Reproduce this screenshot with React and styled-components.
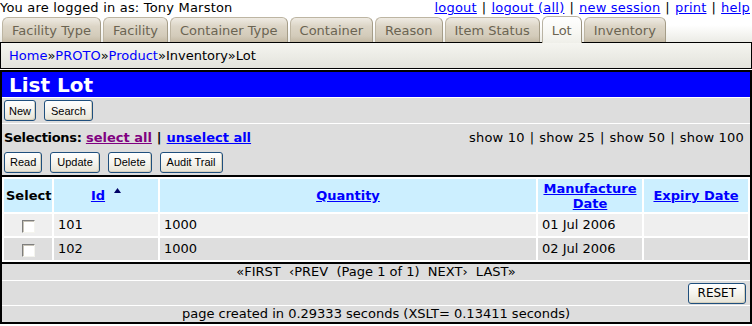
import React from 'react'
import styled, { createGlobalStyle } from 'styled-components'

const GlobalStyle = createGlobalStyle`
  html, body {
    margin: 0;
    padding: 0;
    background: #fff;
    overflow: hidden;
  }
  body {
    font-family: "DejaVu Sans", Verdana, sans-serif;
    font-size: 13px;
    letter-spacing: 0.2px;
    color: #000;
  }
`

const TopBar = styled.div`
  display: flex;
  justify-content: space-between;
  height: 16px;
  line-height: 15px;
  white-space: nowrap;
  padding-right: 2px;
`

const Link = styled.a`
  color: ${p => (p.$visited ? '#800080' : '#0000ff')};
  text-decoration: ${p => (p.$plain ? 'none' : 'underline')};
  cursor: pointer;
`

const Sep = styled.span`
  padding: 0 ${p => p.$pad || 5}px;
`

const TabBar = styled.div`
  position: relative;
  z-index: 1;
  display: flex;
  align-items: flex-end;
  gap: 2px;
  height: 26px;
  padding-left: 2px;
  letter-spacing: 0;
  background: linear-gradient(#fff 35%, #ebebe5);
`

const Tab = styled.div`
  box-sizing: border-box;
  height: ${p => (p.$active ? 27 : 25)}px;
  margin-bottom: ${p => (p.$active ? -1 : 0)}px;
  padding: ${p => (p.$active ? 3 : 2)}px 9px 0;
  line-height: 21px;
  white-space: nowrap;
  color: #6b6452;
  border: 1px solid ${p => (p.$active ? '#b9b3a3' : '#bdb5a2')};
  border-right-color: ${p => (p.$active ? '#9c9481' : '#a59d88')};
  border-bottom: none;
  border-radius: 6px 6px 0 0;
  background: ${p =>
    p.$active
      ? 'linear-gradient(#ffffff, #f7f7f3 60%, #efefe9)'
      : 'linear-gradient(#efebe3, #dcd5c6 35%, #d3cbba 75%, #c3b9a4)'};
`

const Crumbs = styled.div`
  box-sizing: border-box;
  height: 27px;
  margin-bottom: 1px;
  padding-left: 8px;
  line-height: 25px;
  letter-spacing: 0;
  border: 1px solid #000;
  background: linear-gradient(#f5f5f0, #ecece6 50%, #e3e3dc);
  white-space: nowrap;
`

const Main = styled.div`
  border: 2px solid #000;
`

const Title = styled.div`
  height: 25px;
  padding-left: 7px;
  line-height: 26px;
  background: #0000ff;
  color: #fff;
  font-weight: bold;
  font-size: 20px;
  letter-spacing: 0;
`

const Band = styled.div`
  box-sizing: border-box;
  height: ${p => p.$h}px;
  background: #dddddd;
  border-top: ${p => (p.$line ? '1px solid #fff' : 'none')};
`

const ButtonRow = styled.div`
  display: flex;
  align-items: center;
  gap: 8px;
  height: ${p => p.$h || 25}px;
  padding-left: 2px;
  justify-content: ${p => (p.$right ? 'flex-end' : 'flex-start')};
  padding-right: ${p => (p.$right ? 4 : 0)}px;
`

const Button = styled.button`
  box-sizing: border-box;
  height: 21px;
  padding: 0 ${p => p.$pad || 5}px;
  margin: 0;
  font-family: ${p => (p.$big ? '"DejaVu Sans", Verdana, sans-serif' : '"Liberation Sans", Arial, sans-serif')};
  font-size: ${p => (p.$big ? 12 : 11)}px;
  letter-spacing: 0;
  color: #000;
  border: 1px solid #1f4f7d;
  border-radius: 3px;
  background: linear-gradient(#ffffff, #f5f4ee 50%, #e6e3d6);
  box-shadow: inset -1px -1px 0 #d6d0bd;
`

const SelRow = styled.div`
  display: flex;
  justify-content: space-between;
  align-items: center;
  height: 27px;
  padding: 0 6px 0 2px;
  white-space: nowrap;
`

const Bold = styled.span`
  font-weight: bold;
  letter-spacing: ${p => (p.$tight ? '-0.3px' : '0')};
`

const TableWrap = styled.div`
  border-top: 2px solid #000;
  border-bottom: 2px solid #000;
  background: #fff;
`

const Table = styled.table`
  width: 100%;
  table-layout: fixed;
  border-collapse: separate;
  border-spacing: 2px;
`

const Th = styled.th`
  box-sizing: border-box;
  width: ${p => p.$w}px;
  height: 33px;
  padding: 0 2px;
  background: #ccefff;
  font-weight: bold;
  text-align: center;
  line-height: 15px;
  letter-spacing: 0;
  a {
    color: #0000ff;
  }
`

const Td = styled.td`
  height: 22px;
  padding: 0 4px;
  background: ${p => (p.$alt ? '#dedede' : '#efefef')};
  text-align: ${p => (p.$center ? 'center' : 'left')};
  line-height: 16px;
  letter-spacing: 0;
  white-space: nowrap;
`

const Check = styled.span`
  display: inline-block;
  box-sizing: border-box;
  width: 13px;
  height: 13px;
  margin-top: 3px;
  vertical-align: top;
  border: 1px solid;
  border-color: #7e7e7e #f4f4ee #f4f4ee #7e7e7e;
  background: #fff;
  box-shadow: inset 1px 1px 0 #c8c4b8;
`

const SortArrow = styled.svg`
  margin-left: 9px;
  vertical-align: 7px;
`

const Centered = styled.div`
  height: 100%;
  text-align: center;
  line-height: ${p => p.$lh || 16}px;
  white-space: pre;
  letter-spacing: 0;
`

const tabs = ['Facility Type', 'Facility', 'Container Type', 'Container', 'Reason', 'Item Status', 'Lot', 'Inventory']

const rows = [
  { id: '101', qty: '1000', made: '01 Jul 2006' },
  { id: '102', qty: '1000', made: '02 Jul 2006' },
]

export default function App() {
  return (
    <>
      <GlobalStyle />
      <TopBar>
        <span>You are logged in as: Tony Marston</span>
        <span>
          <Link>logout</Link><Sep>|</Sep>
          <Link>logout (all)</Link><Sep>|</Sep>
          <Link>new session</Link><Sep>|</Sep>
          <Link>print</Link><Sep>|</Sep>
          <Link>help</Link>
        </span>
      </TopBar>
      <TabBar>
        {tabs.map(t => (
          <Tab key={t} $active={t === 'Lot'}>{t}</Tab>
        ))}
      </TabBar>
      <Crumbs>
        <Link $plain>Home</Link>»<Link $plain>PROTO</Link>»<Link $plain>Product</Link>»Inventory»Lot
      </Crumbs>
      <Main>
        <Title>List Lot</Title>
        <Band $h={26} $line>
          <ButtonRow>
            <Button $pad={4}>New</Button>
            <Button $pad={6}>Search</Button>
          </ButtonRow>
        </Band>
        <Band $h={52} $line>
          <SelRow>
            <span>
              <Bold $tight>Selections: </Bold>
              <Bold><Link $visited>select all</Link></Bold>
              <Bold><Sep $pad={5}>|</Sep></Bold>
              <Bold><Link>unselect all</Link></Bold>
            </span>
            <span>
              show 10<Sep>|</Sep>show 25<Sep>|</Sep>show 50<Sep>|</Sep>show 100
            </span>
          </SelRow>
          <ButtonRow $h={22}>
            <Button>Read</Button>
            <Button $pad={6}>Update</Button>
            <Button>Delete</Button>
            <Button $pad={6}>Audit Trail</Button>
          </ButtonRow>
        </Band>
        <TableWrap>
          <Table>
            <thead>
              <tr>
                <Th $w={48}>Select</Th>
                <Th $w={104}>
                  <Link>Id</Link>
                  <SortArrow width="7" height="5" viewBox="0 0 7 5">
                    <path d="M3.5 0 L7 5 L0 5 Z" fill="#000066" />
                  </SortArrow>
                </Th>
                <Th><Link>Quantity</Link></Th>
                <Th $w={104}><Link>Manufacture<br />Date</Link></Th>
                <Th $w={104}><Link>Expiry Date</Link></Th>
              </tr>
            </thead>
            <tbody>
              {rows.map((r, i) => (
                <tr key={r.id}>
                  <Td $alt={i % 2 === 1} $center><Check /></Td>
                  <Td $alt={i % 2 === 1}>{r.id}</Td>
                  <Td $alt={i % 2 === 1}>{r.qty}</Td>
                  <Td $alt={i % 2 === 1}>{r.made}</Td>
                  <Td $alt={i % 2 === 1}></Td>
                </tr>
              ))}
            </tbody>
          </Table>
        </TableWrap>
        <Band $h={16}>
          <Centered>«FIRST  ‹PREV  (Page 1 of 1)  NEXT›  LAST»</Centered>
        </Band>
        <Band $h={25} $line>
          <ButtonRow $h={24} $right>
            <Button $big $pad={9}>RESET</Button>
          </ButtonRow>
        </Band>
        <Band $h={17} $line>
          <Centered $lh={16}>page created in 0.29333 seconds (XSLT= 0.13411 seconds)</Centered>
        </Band>
      </Main>
    </>
  )
}
